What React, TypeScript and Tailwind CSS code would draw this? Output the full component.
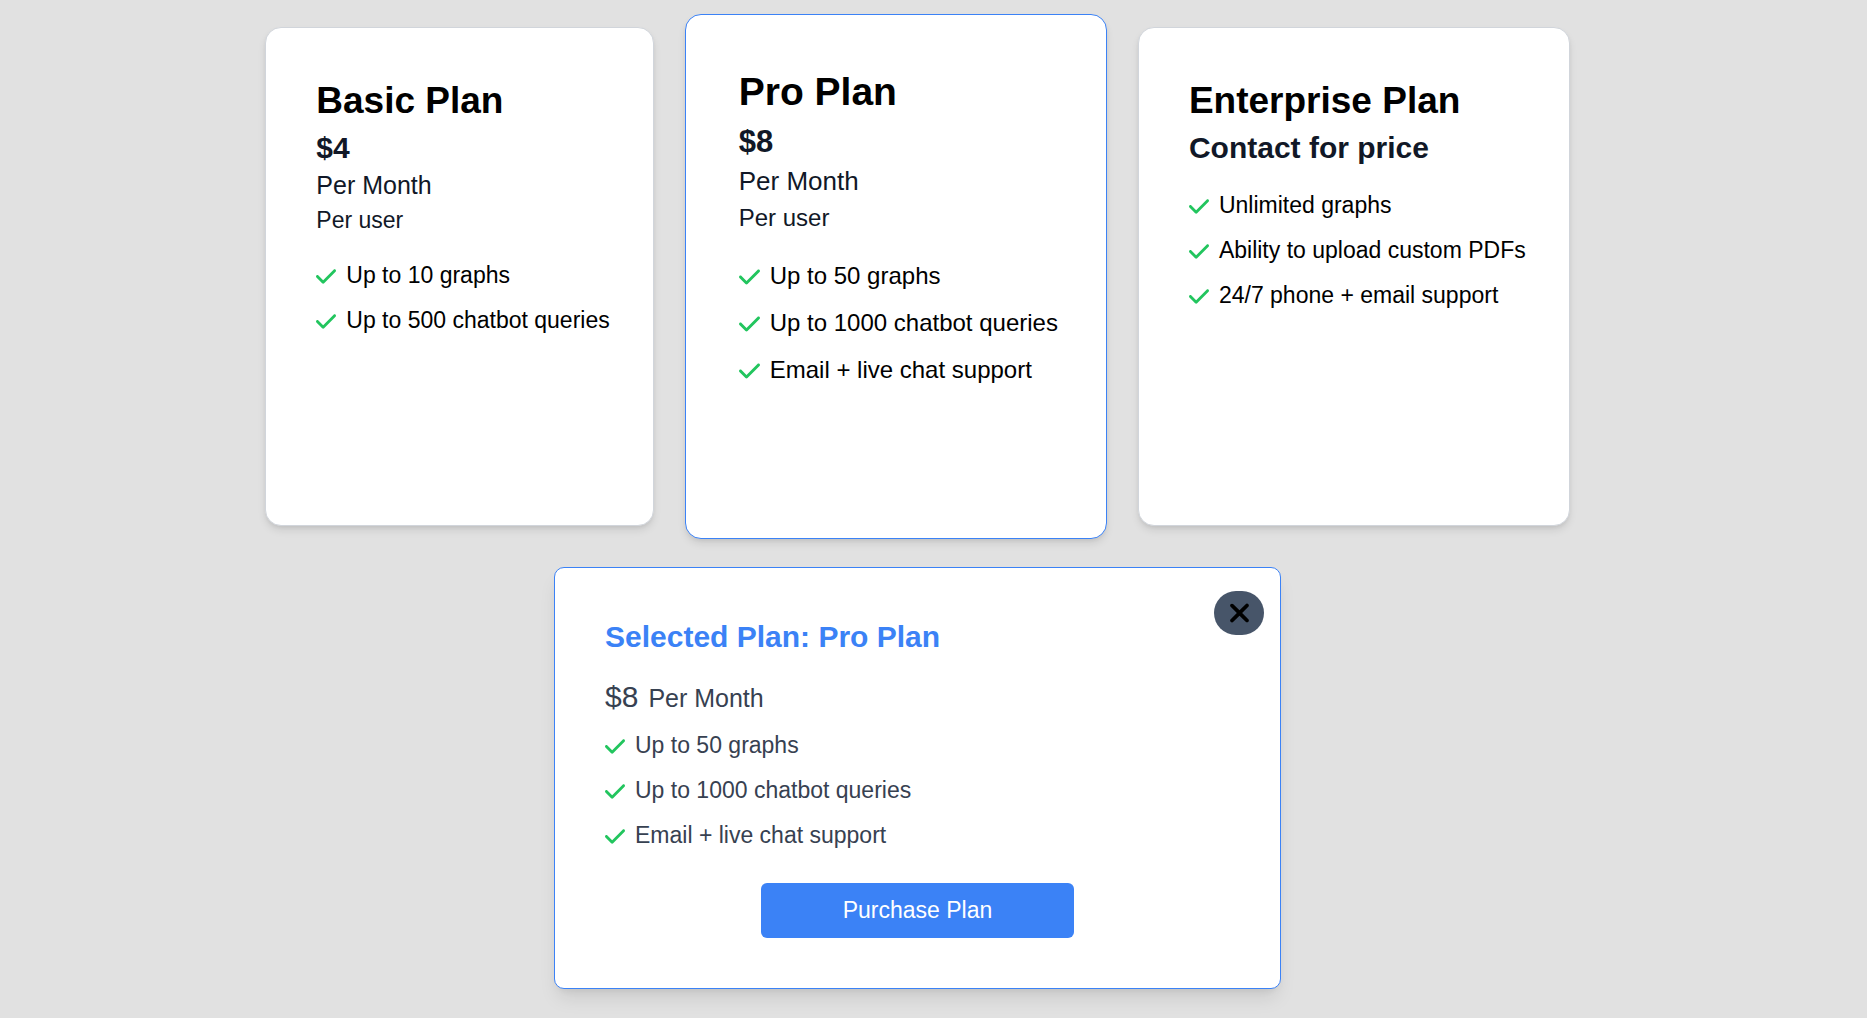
import { useState } from "react";
import { FaCheck, FaXmark } from "react-icons/fa6";

type Plan = {
  name: string;
  price: string;
  period?: string;
  unit?: string;
  features: string[];
};

const plans: Plan[] = [
  {
    name: "Basic Plan",
    price: "$4",
    period: "Per Month",
    unit: "Per user",
    features: ["Up to 10 graphs", "Up to 500 chatbot queries"],
  },
  {
    name: "Pro Plan",
    price: "$8",
    period: "Per Month",
    unit: "Per user",
    features: ["Up to 50 graphs", "Up to 1000 chatbot queries", "Email + live chat support"],
  },
  {
    name: "Enterprise Plan",
    price: "Contact for price",
    features: ["Unlimited graphs", "Ability to upload custom PDFs", "24/7 phone + email support"],
  },
];

const regular = {
  card: "min-h-[499px] border-[#d1d5db] py-[50px] pr-[43px] pl-[50px]",
  title: "mb-[5px] text-[37px] leading-[45px]",
  price: "text-[30px] leading-[40px]",
  period: "text-[25px] leading-[35px]",
  unit: "mb-5 text-[23px] leading-[35px]",
  priceOnly: "mb-5",
  list: "gap-[10px] text-[23px] leading-[35px]",
  icon: "mr-[10px] h-[23px] w-5",
};

const highlighted = {
  card: "min-h-[525px] border-[#3b82f6] py-[53px] pr-[48px] pl-[53px]",
  title: "mb-[6px] text-[39px] leading-[47px]",
  price: "text-[31px] leading-[42px]",
  period: "text-[26px] leading-[36px]",
  unit: "mb-[21px] text-[24px] leading-[37px]",
  priceOnly: "mb-[21px]",
  list: "gap-[10px] text-[24px] leading-[37px]",
  icon: "mr-[10px] h-6 w-[21px]",
};

function FeatureList({ items, list, icon }: { items: string[]; list: string; icon: string }) {
  return (
    <ul className={`flex flex-col ${list}`}>
      {items.map((item) => (
        <li key={item} className="flex items-center whitespace-nowrap">
          <FaCheck className={`mt-0.5 shrink-0 text-[#22c55e] ${icon}`} />
          {item}
        </li>
      ))}
    </ul>
  );
}

function PlanCard({ plan, selected, onSelect }: { plan: Plan; selected: boolean; onSelect: () => void }) {
  const s = selected ? highlighted : regular;
  return (
    <article
      onClick={onSelect}
      className={`cursor-pointer rounded-2xl border bg-white text-black shadow-[0_5px_8px_-1px_rgba(0,0,0,0.1),0_2px_5px_-2px_rgba(0,0,0,0.1)] ${s.card}`}
    >
      <h2 className={`font-bold whitespace-nowrap ${s.title}`}>{plan.name}</h2>
      <p className={`font-bold text-[#111827] ${s.price} ${plan.period ? "" : s.priceOnly}`}>{plan.price}</p>
      {plan.period && <p className={`text-[#111827] ${s.period}`}>{plan.period}</p>}
      {plan.unit && <p className={`text-[#111827] ${s.unit}`}>{plan.unit}</p>}
      <FeatureList items={plan.features} list={s.list} icon={s.icon} />
    </article>
  );
}

export default function App() {
  const [selected, setSelected] = useState<number | null>(1);
  const plan = selected === null ? null : plans[selected];

  return (
    <main className="flex min-h-screen flex-col items-center bg-[#e1e1e1] pt-[14px] pr-8 pb-7 font-['Liberation_Sans',Arial,sans-serif]">
      <section className="flex flex-wrap items-center justify-center gap-[31px]">
        {plans.map((p, i) => (
          <PlanCard key={p.name} plan={p} selected={i === selected} onSelect={() => setSelected(i)} />
        ))}
      </section>

      {plan && (
        <section className="relative mt-7 w-full max-w-[727px] rounded-[10px] border border-[#3b82f6] bg-white px-[50px] pt-[49px] pb-[50px] text-[#374151] shadow-[0_12px_19px_-4px_rgba(0,0,0,0.1),0_5px_8px_-5px_rgba(0,0,0,0.1)]">
          <button
            type="button"
            aria-label="Close"
            onClick={() => setSelected(null)}
            className="absolute top-[23px] right-4 flex h-11 w-[50px] items-center justify-center rounded-full bg-[#475569] text-black"
          >
            <FaXmark className="h-[30px] w-[23px]" />
          </button>
          <h2 className="mb-5 text-[30px] leading-[40px] font-bold text-[#3b82f6]">Selected Plan: {plan.name}</h2>
          <p className="mb-[10px] flex items-baseline gap-[10px] text-[30px] leading-[40px]">
            {plan.price}
            {plan.period && <span className="text-[25px]">{plan.period}</span>}
          </p>
          <FeatureList items={plan.features} list={regular.list} icon={regular.icon} />
          <button
            type="button"
            className="mx-auto mt-[30px] block w-[313px] max-w-full rounded-md bg-[#3b82f6] py-[10px] text-[23px] leading-[35px] text-white"
          >
            Purchase Plan
          </button>
        </section>
      )}
    </main>
  );
}
